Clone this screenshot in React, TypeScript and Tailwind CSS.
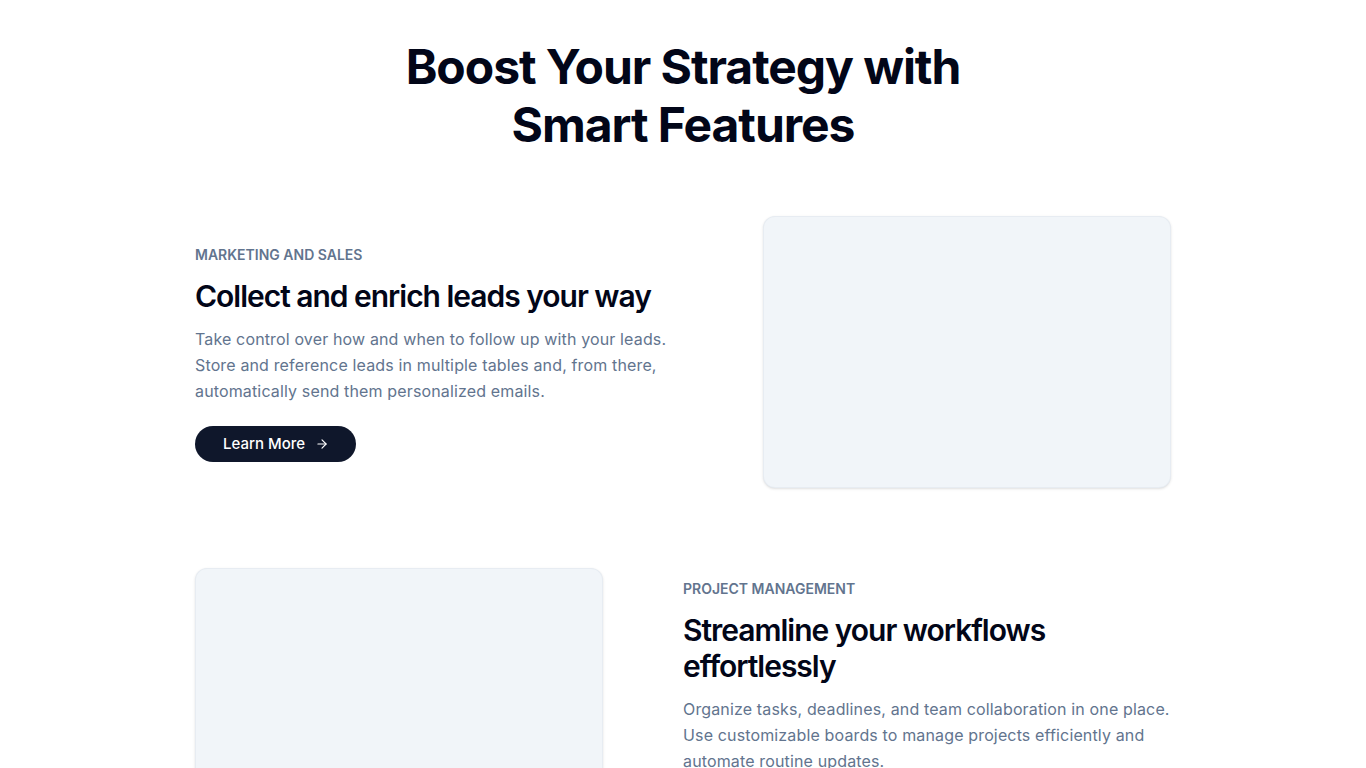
import React from "react";
import { ArrowRight } from "lucide-react";

const features = [
  {
    label: "MARKETING AND SALES",
    title: "Collect and enrich leads your way",
    description:
      "Take control over how and when to follow up with your leads. Store and reference leads in multiple tables and, from there, automatically send them personalized emails.",
    reverse: false,
  },
  {
    label: "PROJECT MANAGEMENT",
    title: "Streamline your workflows effortlessly",
    description:
      "Organize tasks, deadlines, and team collaboration in one place. Use customizable boards to manage projects efficiently and automate routine updates.",
    reverse: true,
  },
];

const FeatureRow: React.FC<{ feature: (typeof features)[number] }> = ({ feature }) => {
  const text = (
    <div className="w-[488px] shrink-0 pt-[3px]">
      <div className="text-sm font-semibold text-slate-500">{feature.label}</div>
      <h3 className="mt-[13px] text-3xl font-semibold tracking-[-0.034em] text-slate-950">
        {feature.title}
      </h3>
      <p className="mt-[12px] text-base leading-[26px] tracking-[0.009em] text-slate-500">
        {feature.description}
      </p>
      <a
        href="#"
        className="mt-[22px] inline-flex h-9 items-center gap-[10px] rounded-full bg-slate-900 pl-7 pr-[27px] text-[15px] font-medium text-white"
      >
        Learn More
        <ArrowRight size={14} strokeWidth={2} />
      </a>
    </div>
  );
  const image = (
    <div className="h-[272px] w-[408px] shrink-0 rounded-xl border border-slate-200/70 bg-slate-100 shadow-sm"></div>
  );

  return (
    <div className="flex items-center gap-20">
      {feature.reverse ? (
        <>
          {image}
          {text}
        </>
      ) : (
        <>
          {text}
          {image}
        </>
      )}
    </div>
  );
};

export default function App() {
  return (
    <section
      className="min-h-screen bg-white pt-[38px] pb-24"
      style={{ fontFamily: "Inter, 'Noto Sans', sans-serif" }}
    >
      <div className="mx-auto w-[976px]">
        <h2 className="text-center text-5xl leading-[1.2] font-bold tracking-[-0.022em] text-slate-950">
          Boost Your Strategy with
          <br />
          Smart Features
        </h2>
        <div className="mt-[63px] flex flex-col gap-20">
          {features.map((feature, index) => (
            <FeatureRow key={index} feature={feature} />
          ))}
        </div>
      </div>
    </section>
  );
}
